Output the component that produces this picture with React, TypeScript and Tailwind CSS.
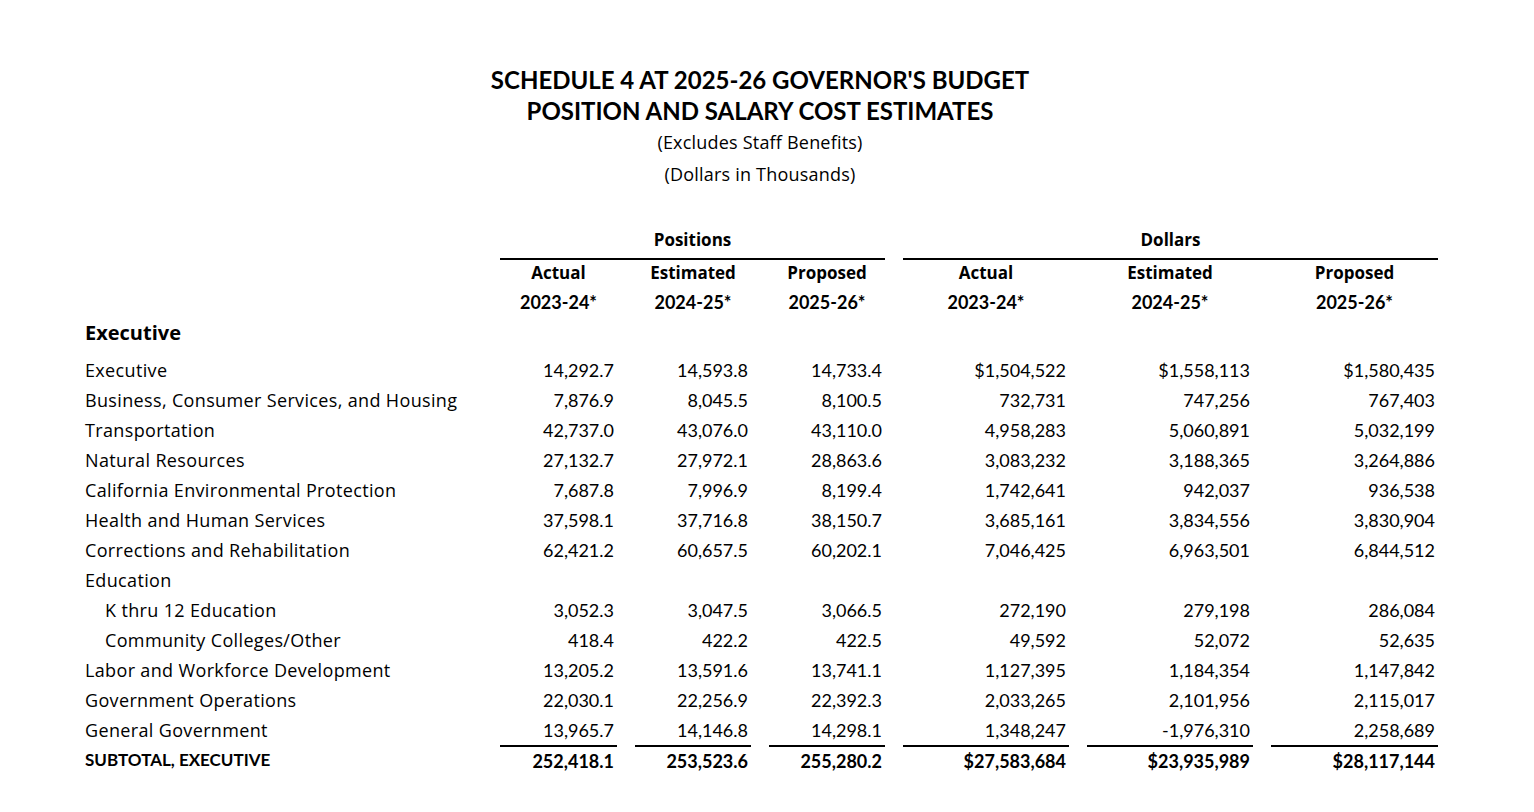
import React from "react";

type Row = {
  label: string;
  indent?: boolean;
  values?: string[];
};

const rows: Row[] = [
  { label: "Executive", values: ["14,292.7", "14,593.8", "14,733.4", "$1,504,522", "$1,558,113", "$1,580,435"] },
  { label: "Business, Consumer Services, and Housing", values: ["7,876.9", "8,045.5", "8,100.5", "732,731", "747,256", "767,403"] },
  { label: "Transportation", values: ["42,737.0", "43,076.0", "43,110.0", "4,958,283", "5,060,891", "5,032,199"] },
  { label: "Natural Resources", values: ["27,132.7", "27,972.1", "28,863.6", "3,083,232", "3,188,365", "3,264,886"] },
  { label: "California Environmental Protection", values: ["7,687.8", "7,996.9", "8,199.4", "1,742,641", "942,037", "936,538"] },
  { label: "Health and Human Services", values: ["37,598.1", "37,716.8", "38,150.7", "3,685,161", "3,834,556", "3,830,904"] },
  { label: "Corrections and Rehabilitation", values: ["62,421.2", "60,657.5", "60,202.1", "7,046,425", "6,963,501", "6,844,512"] },
  { label: "Education" },
  { label: "K thru 12 Education", indent: true, values: ["3,052.3", "3,047.5", "3,066.5", "272,190", "279,198", "286,084"] },
  { label: "Community Colleges/Other", indent: true, values: ["418.4", "422.2", "422.5", "49,592", "52,072", "52,635"] },
  { label: "Labor and Workforce Development", values: ["13,205.2", "13,591.6", "13,741.1", "1,127,395", "1,184,354", "1,147,842"] },
  { label: "Government Operations", values: ["22,030.1", "22,256.9", "22,392.3", "2,033,265", "2,101,956", "2,115,017"] },
  { label: "General Government", values: ["13,965.7", "14,146.8", "14,298.1", "1,348,247", "-1,976,310", "2,258,689"] },
];

const subtotal = ["252,418.1", "253,523.6", "255,280.2", "$27,583,684", "$23,935,989", "$28,117,144"];

const grid =
  "grid grid-cols-[397px_117px_116px_116px_166px_166px_167px] gap-x-[18px]";

const years = [
  ["Actual", "2023-24*"],
  ["Estimated", "2024-25*"],
  ["Proposed", "2025-26*"],
];

const sans = "font-['Open_Sans','Liberation_Sans',sans-serif]";

export default function App() {
  return (
    <div className="min-h-[812px] w-[1534px] bg-white pt-[64px] font-['Lato','Liberation_Sans',sans-serif] text-black">
      {/* Title */}
      <div className="pr-[14px] text-center">
        <div className="text-[24px] font-bold leading-[31px]">
          SCHEDULE 4 AT 2025-26 GOVERNOR'S BUDGET
        </div>
        <div className="text-[24px] font-bold leading-[31px]">
          POSITION AND SALARY COST ESTIMATES
        </div>
        <div className={`${sans} text-[18px] tracking-[0.2px] leading-[32px]`}>
          (Excludes Staff Benefits)
        </div>
        <div className={`${sans} text-[18px] tracking-[0.2px] leading-[32px]`}>
          (Dollars in Thousands)
        </div>
      </div>

      {/* Table */}
      <div className="mt-[38px] pl-[85px]">
        <div className={grid}>
          <div />
          <div className={`${sans} col-span-3 border-b-2 border-black pb-[6px] text-center text-[17px] font-bold leading-[24px]`}>
            Positions
          </div>
          <div className={`${sans} col-span-3 border-b-2 border-black pb-[6px] text-center text-[17px] font-bold leading-[24px]`}>
            Dollars
          </div>
        </div>

        <div className={grid}>
          <div />
          {[...years, ...years].map(([a, b], i) => (
            <div key={i} className="text-center font-bold">
              <div className={`${sans} text-[17px] leading-[26px]`}>{a}</div>
              <div className="text-[18px] leading-[32px]">{b}</div>
            </div>
          ))}
        </div>

        <div className={`${sans} text-[20px] font-bold leading-[30px]`}>Executive</div>

        <div className="mt-[7px] text-[18px]">
          {rows.map((r) => (
            <div key={r.label} className={`${grid} h-[30px] items-center`}>
              <div
                className={`${sans} text-[18px] tracking-[0.35px] ${r.indent ? "pl-[20px]" : ""}`}
              >
                {r.label}
              </div>
              {(r.values ?? ["", "", "", "", "", ""]).map((v, i) => (
                <div key={i} className="pr-[3px] text-right">
                  {v}
                </div>
              ))}
            </div>
          ))}
          <div className={`${grid} h-[30px] font-bold`}>
            <div className="flex items-center text-[17px]">SUBTOTAL, EXECUTIVE</div>
            {subtotal.map((v, i) => (
              <div
                key={i}
                className="flex items-center justify-end border-t-2 border-black pr-[3px]"
              >
                {v}
              </div>
            ))}
          </div>
        </div>
      </div>
    </div>
  );
}
